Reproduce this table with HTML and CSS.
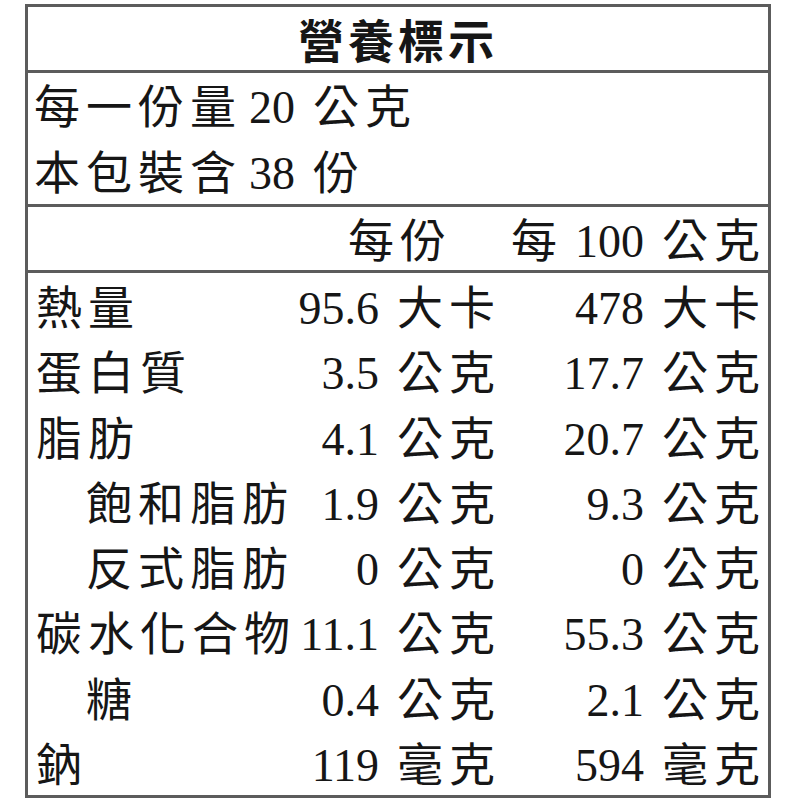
FILE: index.html
```html
<!DOCTYPE html>
<html lang="zh-Hant">
<head>
<meta charset="utf-8">
<title>營養標示</title>
<link rel="stylesheet" href="styles.css">
</head>
<body>
<div class="label">
  <div class="title">營養標示</div>
  <div class="serving">
    <div class="line">每一份量<span class="n lead">20</span><span class="u">公克</span></div>
    <div class="line">本包裝含<span class="n lead">38</span><span class="u">份</span></div>
  </div>
  <div class="head">
    <div class="hc"></div>
    <div class="hc c2">每份</div>
    <div class="hc c3">每<span class="n lead2">100</span><span class="u">公克</span></div>
  </div>
  <div class="rows">
    <div class="name">熱量</div>
    <div class="v c2"><span class="n">95.6</span><span class="u">大卡</span></div>
    <div class="v c3"><span class="n">478</span><span class="u">大卡</span></div>

    <div class="name">蛋白質</div>
    <div class="v c2"><span class="n">3.5</span><span class="u">公克</span></div>
    <div class="v c3"><span class="n">17.7</span><span class="u">公克</span></div>

    <div class="name">脂肪</div>
    <div class="v c2"><span class="n">4.1</span><span class="u">公克</span></div>
    <div class="v c3"><span class="n">20.7</span><span class="u">公克</span></div>

    <div class="name sub">飽和脂肪</div>
    <div class="v c2"><span class="n">1.9</span><span class="u">公克</span></div>
    <div class="v c3"><span class="n">9.3</span><span class="u">公克</span></div>

    <div class="name sub">反式脂肪</div>
    <div class="v c2"><span class="n">0</span><span class="u">公克</span></div>
    <div class="v c3"><span class="n">0</span><span class="u">公克</span></div>

    <div class="name">碳水化合物</div>
    <div class="v c2"><span class="n">11.1</span><span class="u">公克</span></div>
    <div class="v c3"><span class="n">55.3</span><span class="u">公克</span></div>

    <div class="name sub">糖</div>
    <div class="v c2"><span class="n">0.4</span><span class="u">公克</span></div>
    <div class="v c3"><span class="n">2.1</span><span class="u">公克</span></div>

    <div class="name">鈉</div>
    <div class="v c2"><span class="n">119</span><span class="u">毫克</span></div>
    <div class="v c3"><span class="n">594</span><span class="u">毫克</span></div>
  </div>
</div>
</body>
</html>
```
FILE: styles.css
```css
html, body {
  margin: 0;
  padding: 0;
  background: #ffffff;
}

.label {
  box-sizing: content-box;
  width: 740px;
  margin: 4px 0 0 25px;
  border: 3px solid #5c5c5c;
  font-family: "Liberation Serif", "Noto Sans CJK TC", serif;
  font-size: 46px;
  color: #161616;
  letter-spacing: 6px;
}

.title {
  height: 63px;
  line-height: 63px;
  text-align: center;
  font-family: "Noto Sans CJK TC", sans-serif;
  font-weight: 700;
  letter-spacing: 4px;
  border-bottom: 3px solid #5c5c5c;
}

.serving {
  height: 131px;
  border-bottom: 3px solid #5c5c5c;
}

.serving .line {
  box-sizing: border-box;
  height: 65.5px;
  padding-top: 5px;
  line-height: 60.5px;
  padding-left: 6px;
  white-space: nowrap;
}

.n {
  letter-spacing: 0;
}

.lead {
  margin-left: 7px;
}

.lead2 {
  margin-left: 12px;
}

.u {
  margin-left: 18px;
}

.head {
  box-sizing: border-box;
  display: grid;
  grid-template-columns: 265px 214px 261px;
  height: 66px;
  padding-top: 6px;
  line-height: 57px;
  border-bottom: 3px solid #5c5c5c;
  white-space: nowrap;
}

.head .c2 {
  text-align: center;
}

.head .c3 {
  text-align: right;
  padding-right: 2px;
}

.rows {
  display: grid;
  grid-template-columns: 265px 214px 261px;
  grid-template-rows: repeat(8, 65.25px);
  white-space: nowrap;
}

.name,
.v {
  box-sizing: border-box;
  padding-top: 6px;
  line-height: 59.25px;
}

.name {
  padding-left: 8px;
}

.name.sub {
  padding-left: 58px;
}

.v {
  text-align: right;
}

.v.c2 {
  padding-right: 6px;
}

.v.c3 {
  padding-right: 2px;
}
```
